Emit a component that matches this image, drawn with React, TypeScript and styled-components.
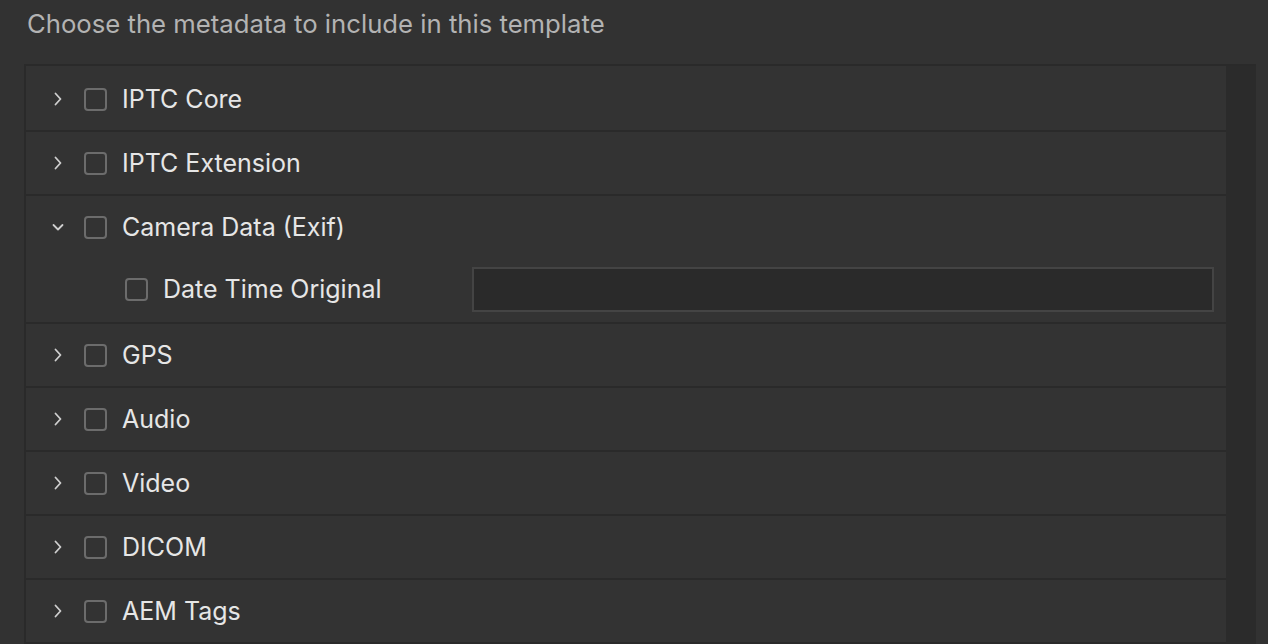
import React, { useState } from "react";
import styled, { createGlobalStyle } from "styled-components";

const GlobalStyle = createGlobalStyle`
  html, body {
    margin: 0;
    padding: 0;
    background: #323232;
    font-family: Inter, "Noto Sans", "Liberation Sans", sans-serif;
    overflow: hidden;
  }
`;

interface Group {
  name: string;
  fields?: string[];
}

const groups: Group[] = [
  { name: "IPTC Core" },
  { name: "IPTC Extension" },
  { name: "Camera Data (Exif)", fields: ["Date Time Original"] },
  { name: "GPS" },
  { name: "Audio" },
  { name: "Video" },
  { name: "DICOM" },
  { name: "AEM Tags" },
];

function Chevron({ open }: { open: boolean }) {
  return (
    <ChevronBox>
      <svg width="14" height="14" viewBox="0 0 14 14" fill="none">
        {open ? (
          <path d="M2.5 5 L7 9.5 L11.5 5" stroke="#cfcfcf" strokeWidth="1.8" strokeLinecap="round" strokeLinejoin="round" />
        ) : (
          <path d="M4.5 1.5 L9.5 7 L4.5 12.5" stroke="#cfcfcf" strokeWidth="1.8" strokeLinecap="round" strokeLinejoin="round" />
        )}
      </svg>
    </ChevronBox>
  );
}

export default function App() {
  const [open, setOpen] = useState<Record<string, boolean>>({ "Camera Data (Exif)": true });

  return (
    <Page>
      <GlobalStyle />
      <Heading>Choose the metadata to include in this template</Heading>
      <Panel>
        <List>
          {groups.map((g) => {
            const isOpen = !!open[g.name];
            return (
              <Section key={g.name}>
                <GroupRow onClick={() => setOpen({ ...open, [g.name]: !isOpen })}>
                  <Chevron open={isOpen} />
                  <Checkbox />
                  <Label>{g.name}</Label>
                </GroupRow>
                {isOpen &&
                  g.fields?.map((f) => (
                    <FieldRow key={f}>
                      <Checkbox />
                      <FieldLabel>{f}</FieldLabel>
                      <TextInput />
                    </FieldRow>
                  ))}
              </Section>
            );
          })}
        </List>
        <Track />
      </Panel>
    </Page>
  );
}

const Page = styled.div`
  width: 1268px;
  height: 644px;
`;

const Heading = styled.div`
  height: 48px;
  line-height: 48px;
  padding-left: 27px;
  margin-bottom: 16px;
  font-size: 25.7px;
  color: #b3b3b3;
`;

const Panel = styled.div`
  display: flex;
  margin-left: 24px;
  width: 1232px;
  border-top: 2px solid #2a2a2a;
  border-left: 2px solid #2a2a2a;
  box-sizing: border-box;
`;

const List = styled.div`
  flex: 1;
  display: flex;
  flex-direction: column;
  padding-top: 2px;
  background: #333333;
`;

const Track = styled.div`
  width: 30px;
  background: #2b2b2b;
`;

const Section = styled.div`
  border-bottom: 2px solid #2a2a2a;
  background: #333333;
`;

const GroupRow = styled.div`
  height: 62px;
  display: flex;
  align-items: center;
  padding-left: 25px;
  cursor: pointer;
`;

const ChevronBox = styled.span`
  width: 14px;
  height: 14px;
  display: flex;
  margin-right: 19px;
`;

const Checkbox = styled.span`
  width: 23px;
  height: 23px;
  box-sizing: border-box;
  border: 2px solid #6c6c6c;
  border-radius: 4px;
  flex-shrink: 0;
`;

const Label = styled.span`
  margin-left: 15px;
  font-size: 25px;
  color: #e6e6e6;
`;

const FieldRow = styled.div`
  height: 62px;
  display: flex;
  align-items: center;
  padding-left: 99px;
  padding-right: 12px;
  padding-bottom: 2px;
`;

const FieldLabel = styled.span`
  margin-left: 15px;
  width: 309px;
  font-size: 25px;
  color: #e6e6e6;
`;

const TextInput = styled.div`
  flex: 1;
  height: 41px;
  background: #2a2a2a;
  border: 2px solid #444444;
`;
